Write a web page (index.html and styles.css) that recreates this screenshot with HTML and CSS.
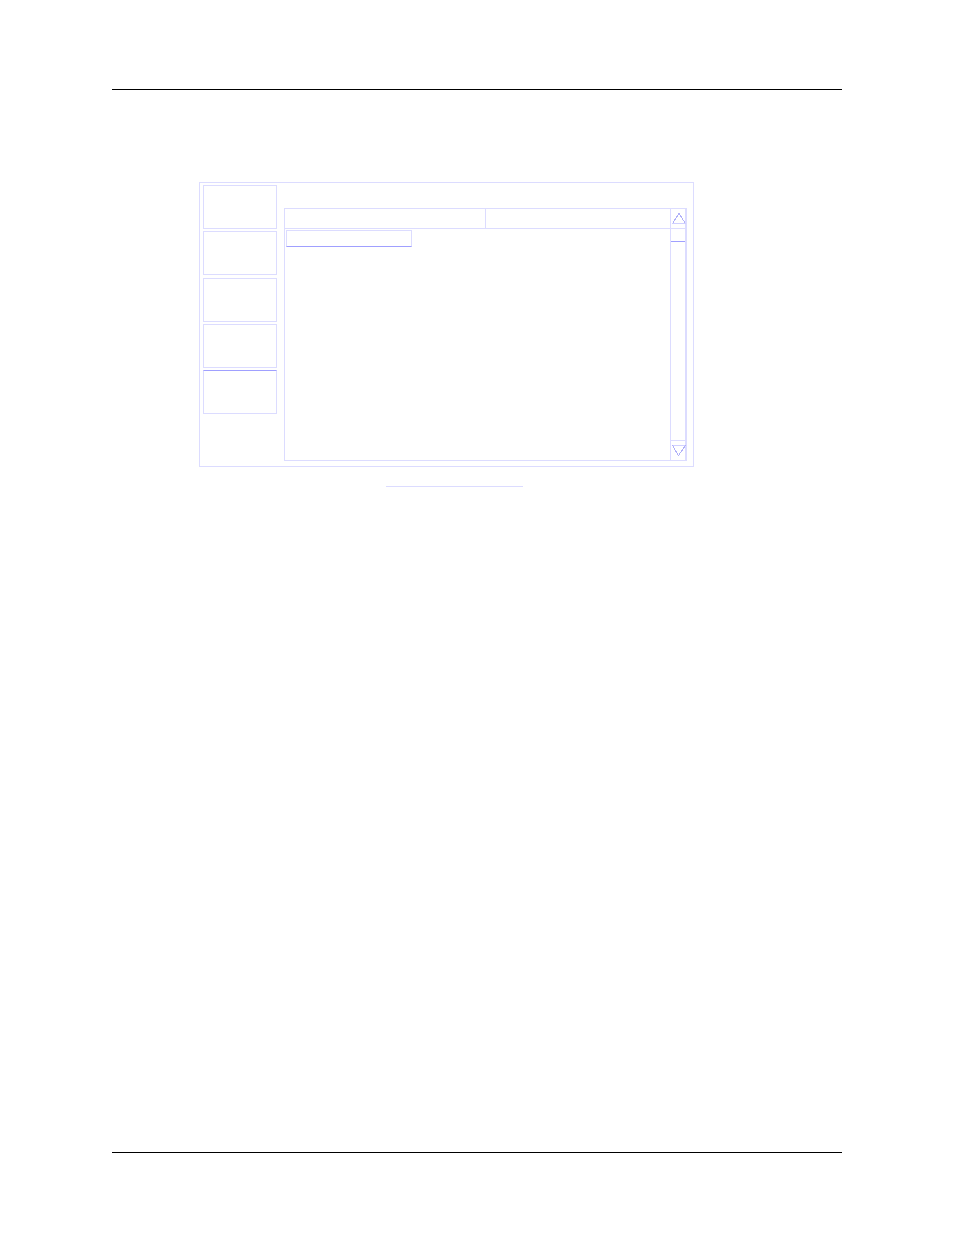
FILE: index.html
```html
<!DOCTYPE html>
<html lang="en">

<head>
    <meta charset="UTF-8">
    <meta name="viewport" content="width=device-width, initial-scale=1.0">
    <title>File list</title>
    <link rel="stylesheet" href="styles.css">
</head>

<body>
    <div class="page">
        <hr class="rule">

        <main class="content">
            <div class="screen">
                <nav class="softkeys">
                    <button type="button" class="softkey" aria-label="Key 1"></button>
                    <button type="button" class="softkey" aria-label="Key 2"></button>
                    <button type="button" class="softkey" aria-label="Key 3"></button>
                    <button type="button" class="softkey" aria-label="Key 4"></button>
                    <button type="button" class="softkey active" aria-label="Key 5"></button>
                </nav>

                <section class="panel">
                    <div class="list">
                        <div class="list-head">
                            <div class="head-cell"></div>
                            <div class="head-cell"></div>
                        </div>
                        <div class="list-body">
                            <div class="selected"></div>
                        </div>
                    </div>

                    <div class="scrollbar">
                        <button type="button" class="arrow up" aria-label="Scroll up">
                            <svg width="14" height="11" viewBox="0 0 14 11">
                                <path class="base" d="M1 10.5H15" />
                                <path d="M1.5 10.5L8 0.5L14.5 10.5" />
                            </svg>
                        </button>
                        <div class="thumb"></div>
                        <div class="track"></div>
                        <button type="button" class="arrow down" aria-label="Scroll down">
                            <svg width="14" height="11" viewBox="0 0 14 11">
                                <path class="base" d="M1 0.5H15" />
                                <path d="M1.5 0.5L7.5 10.5L14.5 0.5" />
                            </svg>
                        </button>
                    </div>
                </section>
            </div>

            <div class="caption-line"></div>
        </main>

        <hr class="rule">
    </div>
</body>

</html>
```
FILE: styles.css
```css
* {
    box-sizing: border-box;
}

body {
    margin: 0;
    background-color: #ffffff;
    font-family: "Liberation Sans", Arial, sans-serif;
}

button {
    padding: 0;
    border: 0;
    background: none;
}

.page {
    display: flex;
    flex-direction: column;
    min-height: 100vh;
    padding: 89px 112px 82px;
}

.rule {
    width: 100%;
    height: 1px;
    margin: 0;
    border: 0;
    background-color: #000000;
}

.content {
    flex: 1;
    padding: 92px 148px 92px 87px;
}

.screen {
    display: flex;
    align-items: flex-start;
    gap: 7px;
    padding: 2px 6px 5px 3px;
    border: 1px solid #dcdcff;
}

/* left column of keys */
.softkeys {
    display: flex;
    flex-direction: column;
    justify-content: space-between;
    width: 74px;
    height: 229px;
}

.softkey {
    height: 44px;
    border: 1px solid #dcdcff;
}

.softkey.active {
    border-top-color: #a0a0ff;
}

.panel {
    display: flex;
    flex: 1;
    height: 253px;
    margin-top: 23px;
    border: 1px solid #dcdcff;
}

.list {
    flex: 1;
}

.list-head {
    display: grid;
    grid-template-columns: 201px 1fr;
    height: 20px;
    border-bottom: 1px solid #dcdcff;
}

.head-cell:first-child {
    border-right: 1px solid #dcdcff;
}

.list-body {
    padding: 1px;
}

.selected {
    width: 126px;
    height: 17px;
    border: 1px solid #dcdcff;
    border-bottom-color: #a0a0ff;
}

.scrollbar {
    display: flex;
    flex-direction: column;
    width: 16px;
    border: solid #dcdcff;
    border-width: 0 1px;
}

.arrow {
    display: flex;
    align-items: center;
    justify-content: center;
    height: 20px;
}

.arrow.up {
    border-bottom: 1px solid #dcdcff;
}

.arrow.down {
    border-top: 1px solid #dcdcff;
}

.arrow svg {
    overflow: visible;
    fill: none;
    stroke: #b0b0f8;
    stroke-width: 1;
    shape-rendering: crispEdges;
}

.arrow .base {
    stroke: #d0d0ff;
}

.thumb {
    height: 13px;
    border-bottom: 1px solid #a0a0ff;
}

.track {
    flex: 1;
}

.caption-line {
    width: 137px;
    height: 1px;
    margin: 19px 0 0 187px;
    background-color: #dcdcff;
}
```
